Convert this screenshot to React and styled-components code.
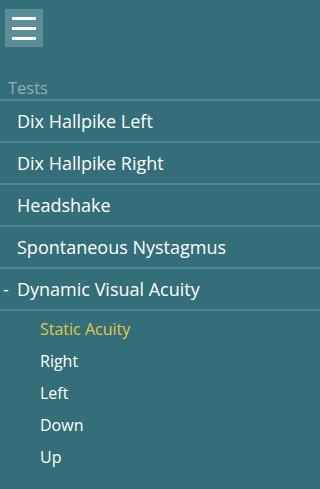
import React from 'react';
import styled, { createGlobalStyle } from 'styled-components';

const GlobalStyle = createGlobalStyle`
  html, body {
    margin: 0;
    padding: 0;
    background-color: #336e79;
  }
  body {
    font-family: "Open Sans", "Noto Sans", sans-serif;
  }
`

const Panel = styled.div`
  width: 100%;
  height: 489px;
  background-color: #336e79;
  overflow: hidden;
`
const Header = styled.div`
  padding: 9px 0 0 5px;
  height: 38px;
`
const MenuButton = styled.button`
  width: 38px;
  height: 38px;
  padding: 0;
  border: none;
  background-color: #5a8f99;
  display: flex;
  flex-direction: column;
  align-items: center;
  justify-content: center;
  gap: 7px;
`
const MenuLine = styled.span`
  display: block;
  width: 24px;
  height: 3px;
  background-color: #ffffff;
`
const SectionTitle = styled.div`
  margin-top: 31px;
  padding-left: 8px;
  height: 21px;
  font-size: 16.5px;
  line-height: 19px;
  color: #8db0b7;
`
const List = styled.div`
  display: flex;
  flex-direction: column;
`
const Row = styled.div`
  display: flex;
  align-items: center;
  height: 40px;
  border-top: 2px solid #4c8590;
  color: #ffffff;
  font-size: 18px;
`
const Toggle = styled.span`
  width: 17px;
  padding-left: 3px;
  box-sizing: border-box;
`
const SubList = styled.div`
  display: flex;
  flex-direction: column;
  border-top: 2px solid #4c8590;
  padding-top: 2px;
`
const SubItem = styled.div`
  height: 32px;
  display: flex;
  align-items: center;
  padding-left: 40px;
  font-size: 16px;
  color: ${p => (p.active ? '#e6c64a' : '#ffffff')};
`

const tests = ['Dix Hallpike Left', 'Dix Hallpike Right', 'Headshake', 'Spontaneous Nystagmus'];
const subs = ['Static Acuity', 'Right', 'Left', 'Down', 'Up'];

export default function App() {
  return (
    <Panel>
      <GlobalStyle />
      <Header>
        <MenuButton>
          <MenuLine />
          <MenuLine />
          <MenuLine />
        </MenuButton>
      </Header>
      <SectionTitle>Tests</SectionTitle>
      <List>
        {tests.map(t => (
          <Row key={t}><Toggle />{t}</Row>
        ))}
        <Row><Toggle>-</Toggle>Dynamic Visual Acuity</Row>
        <SubList>
          {subs.map((s, i) => (
            <SubItem key={s} active={i === 0}>{s}</SubItem>
          ))}
        </SubList>
      </List>
    </Panel>
  );
}
